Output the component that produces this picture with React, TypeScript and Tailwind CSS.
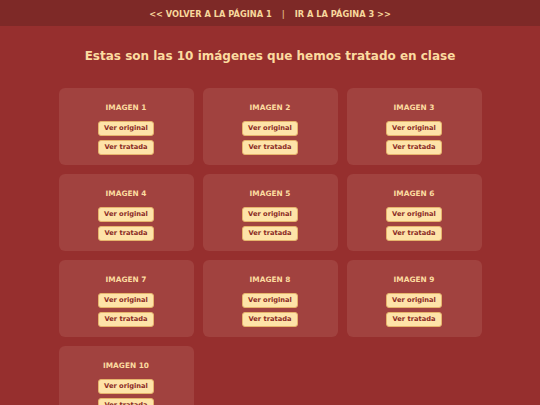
const IMAGES = Array.from({ length: 10 }, (_, i) => `IMAGEN ${i + 1}`);

function ImageCard({ title }: { title: string }) {
  return (
    <div className="flex flex-col items-center rounded-[6px] bg-[#a1423f] pt-[15px] pb-[10px]">
      <h2 className="mb-[9px] text-[7.4px] leading-[9px] font-bold text-[#fcdba0]">{title}</h2>
      <div className="flex flex-col items-center gap-[4px]">
        <button
          type="button"
          className="h-[15px] rounded-[3px] border border-[#e6b46c] bg-[#fee3a8] px-[5.5px] text-[6.7px] leading-[13px] font-bold text-[#8a2b25]"
        >
          Ver original
        </button>
        <button
          type="button"
          className="h-[15px] rounded-[3px] border border-[#e6b46c] bg-[#fee3a8] px-[5.5px] text-[6.7px] leading-[13px] font-bold text-[#8a2b25]"
        >
          Ver tratada
        </button>
      </div>
    </div>
  );
}

export default function App() {
  return (
    <div className="min-h-screen bg-[#962f2e] font-['DejaVu_Sans',Verdana,sans-serif] text-[#fcdba0]">
      <nav className="flex h-[26px] justify-center bg-[#7e2927] pt-[8.5px] text-[8.25px] leading-[10px] font-bold text-[#f7d79c]">
        <a href="#">&lt;&lt; VOLVER A LA PÁGINA 1</a>
        <span className="mx-[10px] opacity-80">|</span>
        <a href="#">IR A LA PÁGINA 3 &gt;&gt;</a>
      </nav>

      <h1 className="mt-[22.5px] text-center text-[12px] leading-[14px] font-bold">
        Estas son las 10 imágenes que hemos tratado en clase
      </h1>

      <main className="mx-auto mt-[25.5px] grid w-[423px] grid-cols-3 gap-[9px] pb-6">
        {IMAGES.map((t) => (
          <ImageCard key={t} title={t} />
        ))}
      </main>
    </div>
  );
}
